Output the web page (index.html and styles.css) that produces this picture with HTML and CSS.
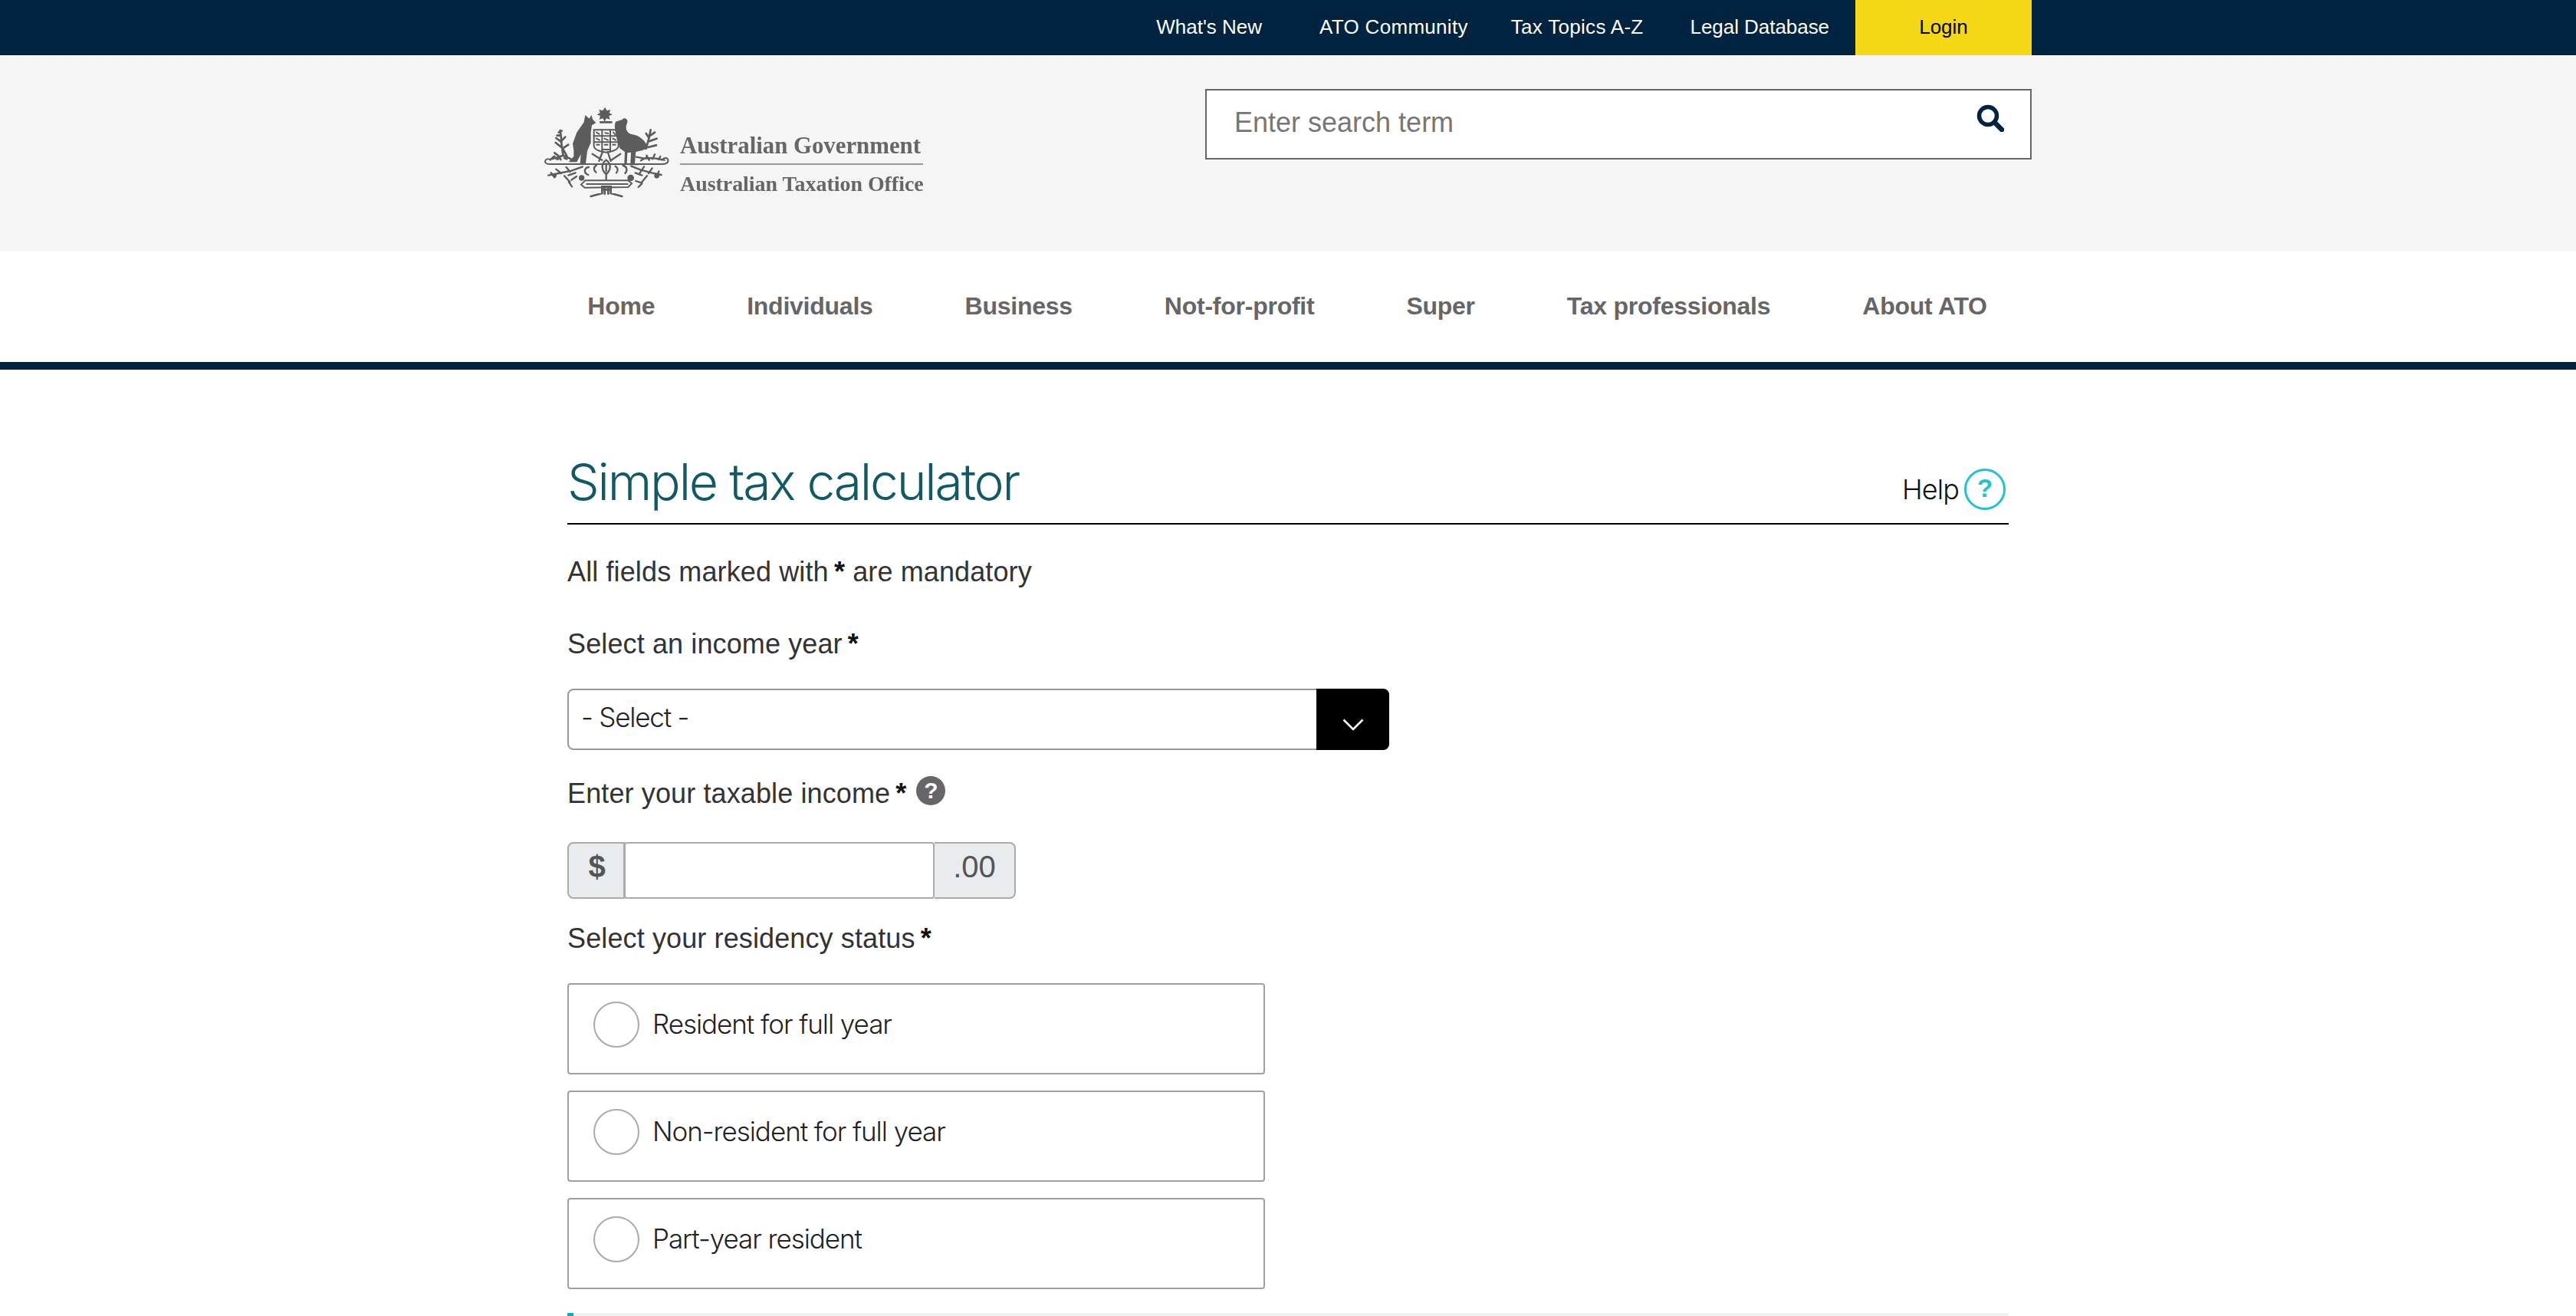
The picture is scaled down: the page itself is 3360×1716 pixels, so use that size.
FILE: index.html
```html
<!DOCTYPE html>
<html lang="en">
<head>
<meta charset="utf-8">
<title>Simple tax calculator</title>
<link rel="stylesheet" href="styles.css">
</head>
<body>
<div class="topbar">
  <nav class="topbar-inner">
    <a class="top-link tl-new">What's New</a>
    <a class="top-link tl-com">ATO Community</a>
    <a class="top-link tl-tax">Tax Topics A-Z</a>
    <a class="top-link tl-leg">Legal Database</a>
    <a class="login">Login</a>
  </nav>
</div>
<header class="masthead">
  <div class="masthead-inner">
    <div class="logo">
      <svg class="crest" viewBox="0 0 570 390" aria-hidden="true">
        <g fill="#5c5c5c">
          <path d="M268 30l7 13 14-4-5 13 12 6-13 6 4 13-14-4-7 13-7-13-14 4 4-13-13-6 12-6-4-13 14 4z"/>
          <rect x="246" y="84" width="50" height="8" rx="3"/>
          <path d="M190 60l16 14 8-14 6 18 12 13-16 9-4 28 0 40-14 32-6 50h-22l3-36-16 30h-32l20-22 0-24-4-26 16-44 28-40z"/>
          <path d="M335 78c4-8 18-6 20 4 2 10-6 16-5 28 1 12 8 22 24 26 28 4 50 22 62 52l-22 10-26 6-4 46h14v6h-40l9-8 2-42-14 2-2 42h-10l2-46-20-14-12-40-6-30c-2-14-2-26 2-34z"/>
        </g>
        <g fill="none" stroke="#5c5c5c" stroke-linecap="round">
          <path d="M224 118h96v62c0 14-20 22-48 26-28-4-48-12-48-26z" stroke-width="6"/>
          <path d="M224 142h96M224 166h96M256 118v86M288 118v86" stroke-width="6"/>
          <path d="M234 128l10 6M268 130l12 2M300 128l8 8M234 152l12 6M265 152l14 6M298 152l12 6M235 176h10M266 176h12M298 176h10M256 195h32" stroke-width="6"/>
          <path d="M50 252h440c18 0 26-6 24-16s-14-10-20-4" stroke-width="6"/>
          <path d="M50 252c-14 0-20-8-16-14 3-7 12-8 20-2" stroke-width="6"/>
          <path d="M56 232l26-6 22-8 30 14M70 208l16 12 8 14M100 196l4 22M92 120l4 30 2 34 20 36M76 150l22 16M74 168l28 22M112 146l-14 14M124 176l-18 12" stroke-width="8"/>
          <path d="M78 232h6M62 226l8-4M108 228l10 4M86 128l12-6M80 140l10 0" stroke-width="8"/>
          <path d="M446 118l-6 30-12 44M462 128l-20 14M470 152l-34 12M468 178l-32 8M428 132l12 18" stroke-width="8"/>
          <path d="M390 224l30 6 36-2 34 6M430 218l10 18M462 214l-8 18M408 238l22-12M484 222l-6 12M500 236l-14-2" stroke-width="7"/>
          <path d="M258 204l-14 36M278 204l12 36M218 212l38 24M328 212l-36 24M272 236c-20 14-20 38 0 56 20-18 20-42 0-56zM272 292v20M272 250v30" stroke-width="7"/>
          <path d="M46 296l40-8 50-10 44-16M76 272l20 16M116 264l14 18M152 286l-28 10M108 298l22 24M156 300l-20 14M126 322l12 18M56 286l14 18M204 264c-20 2-20 24-2 30M234 256c-12 8-12 20-2 28" stroke-width="7"/>
          <path d="M488 294l-38-8-44-12-36-14M452 268l-14 20M420 262l-16 24M386 286l26 10M432 298l-20 24M388 318l24 8M398 342l14-14M478 280l-8 22M338 258c16 2 18 20 8 30M308 260c10 6 12 18 4 26" stroke-width="7"/>
          <path d="M190 316l-16 16 14 12 170-2 14-14-14-12zM196 330h160" stroke-width="6"/>
          <path d="M212 378l44-12v-26h34v26l44 12M256 352h34M266 340v28M280 340v28" stroke-width="8"/>
        </g>
        <g fill="#5c5c5c">
          <circle cx="176" cy="306" r="11"/>
          <circle cx="368" cy="306" r="13"/>
          <circle cx="470" cy="298" r="10"/>
          <circle cx="70" cy="296" r="8"/>
        </g>
      </svg>
      <div class="logo-text">
        <div class="logo-gov">Australian Government</div>
        <div class="logo-ato">Australian Taxation Office</div>
      </div>
    </div>
    <form class="search">
      <input class="search-input" type="text" placeholder="Enter search term">
      <svg class="search-icon" viewBox="0 0 36 36" aria-hidden="true">
        <circle cx="15" cy="15" r="11.5" fill="none" stroke="#00233f" stroke-width="5.5"/>
        <path d="M23.5 23.5L33 33" stroke="#00233f" stroke-width="6.5" stroke-linecap="round"/>
      </svg>
    </form>
  </div>
</header>
<nav class="mainnav">
  <a class="nav-item">Home</a>
  <a class="nav-item">Individuals</a>
  <a class="nav-item">Business</a>
  <a class="nav-item">Not-for-profit</a>
  <a class="nav-item">Super</a>
  <a class="nav-item">Tax professionals</a>
  <a class="nav-item">About ATO</a>
</nav>
<main class="content">
  <div class="title-row">
    <h1 class="title">Simple tax calculator</h1>
    <div class="help"><span class="help-text">Help</span><span class="help-icon">?</span></div>
  </div>
  <p class="note">All fields marked with <b class="req">*</b> are mandatory</p>
  <label class="field-label lb-year">Select an income year <b class="req">*</b></label>
  <div class="select">
    <span class="select-value">- Select -</span>
    <span class="select-btn">
      <svg class="chev" viewBox="0 0 28 16" aria-hidden="true"><path d="M1.5 1.5L14 14L26.5 1.5" fill="none" stroke="#fff" stroke-width="2.6"/></svg>
    </span>
  </div>
  <label class="field-label lb-income">Enter your taxable income <b class="req">*</b><span class="tip">?</span></label>
  <div class="money">
    <span class="addon addon-l">$</span>
    <input class="money-input" type="text" aria-label="Taxable income">
    <span class="addon addon-r">.00</span>
  </div>
  <label class="field-label lb-res">Select your residency status <b class="req">*</b></label>
  <div class="radios">
    <label class="radio"><span class="radio-dot"></span><span class="radio-text">Resident for full year</span></label>
    <label class="radio"><span class="radio-dot"></span><span class="radio-text">Non-resident for full year</span></label>
    <label class="radio"><span class="radio-dot"></span><span class="radio-text">Part-year resident</span></label>
  </div>
  <div class="progress"><span class="progress-fill"></span></div>
</main>
</body>
</html>
```
FILE: styles.css
```css
* { box-sizing: border-box; }
html, body { margin: 0; padding: 0; background: #fff; }
body { height: 1716px; overflow: hidden; font-family: "Liberation Sans", Arial, sans-serif; color: #333; }

.topbar { background: #00233f; height: 72px; }
.topbar-inner { width: 1940px; margin: 0 auto; height: 72px; display: flex; justify-content: flex-end; align-items: stretch; }
.top-link { color: #fff; font-size: 26px; line-height: 70px; }
.tl-com { margin-left: 75px; letter-spacing: .3px; }
.tl-tax { margin-left: 56px; letter-spacing: .3px; }
.tl-leg { margin-left: 61px; margin-right: 34px; letter-spacing: -.05px; }
.login { width: 230px; background: #f5d815; color: #000; font-size: 26px; line-height: 70px; text-align: center; }

.masthead { background: #f5f5f5; height: 256px; }
.masthead-inner { width: 1940px; margin: 0 auto; display: flex; justify-content: space-between; align-items: flex-start; }
.logo { display: flex; margin-top: 58px; }
.crest { width: 190px; height: 130px; margin-left: -10px; filter: blur(.6px); }
.logo-text { margin-left: -3px; margin-top: 39px; font-family: "Liberation Serif", serif; font-weight: 700; color: #666; width: 317px; filter: blur(.5px); }
.logo-gov { font-size: 30.8px; line-height: 42px; height: 46px; border-bottom: 2px solid #999; white-space: nowrap; }
.logo-ato { font-size: 27.9px; line-height: 42px; margin-top: 4px; white-space: nowrap; }
.search { width: 1078px; height: 92px; margin-top: 44px; background: #fff; border: 2px solid #666; display: flex; align-items: flex-start; }
.search-input { flex: 1; min-width: 0; height: 84px; border: 0; outline: 0; background: transparent; padding: 0 0 0 36px; font-family: inherit; font-size: 36px; color: #333; }
.search-input::placeholder { color: #767676; opacity: 1; }
.search-icon { width: 36px; height: 36px; margin: 18px 34px 0 0; }

.mainnav { height: 154px; border-bottom: 10px solid #00233f; display: flex; justify-content: center; padding: 52px 2px 0 0; }
.nav-item { padding: 0 60px; font-size: 32px; line-height: 38px; height: 38px; font-weight: 700; color: #666; white-space: nowrap; letter-spacing: -.25px; }

.content { width: 1880px; margin: 0 auto; }
.title-row { display: flex; justify-content: space-between; align-items: flex-start; height: 202px; padding-top: 106px; border-bottom: 2px solid #000; }
.title { margin: 0; font-family: Inter, sans-serif; font-weight: 300; font-size: 66px; line-height: 80px; color: #0f5a66; letter-spacing: -2.2px; white-space: nowrap; }
.help { display: flex; align-items: center; margin-right: 4px; margin-top: 23px; }
.help-text { font-family: Inter, sans-serif; font-weight: 300; font-size: 36px; color: #111; letter-spacing: -.9px; margin-right: 7px; }
.help-icon { width: 54px; height: 54px; border: 3.5px solid #1bc3d4; border-radius: 50%; color: #1bc3d4; font-weight: 700; font-size: 33px; line-height: 46px; text-align: center; }

.note { margin: 42px 0 0; font-size: 36px; line-height: 40px; letter-spacing: .12px; }
.req { color: #111; font-weight: 700; margin-left: -3px; }
.field-label { display: block; font-size: 36px; line-height: 40px; letter-spacing: .12px; }
.lb-year { margin-top: 54px; }
.select { display: flex; margin-top: 38px; width: 1072px; height: 80px; border: 2px solid #999; border-radius: 8px; background: #fff; }
.select-value { flex: 1; padding-left: 16px; font-family: Inter, sans-serif; font-weight: 300; font-size: 35px; line-height: 70px; color: #222; letter-spacing: -1.2px; }
.select-btn { width: 95px; margin: -2px -2px -2px 0; background: #000; border-radius: 0 8px 8px 0; display: flex; justify-content: center; }
.chev { width: 28px; height: 16px; margin-top: 39px; }
.lb-income { margin-top: 37px; display: flex; align-items: flex-start; white-space: pre; }
.tip { width: 38px; height: 38px; margin-left: 13px; margin-top: -3px; border-radius: 50%; background: #666; color: #fff; font-weight: 700; font-size: 30px; line-height: 38px; text-align: center; }
.money { display: flex; margin-top: 43px; height: 74px; width: 586px; }
.addon { background: #e9ecee; border: 2px solid #aaa; color: #555; display: block; text-align: center; }
.addon-l { width: 75px; padding-left: 2px; border-radius: 8px 0 0 8px; font-weight: 700; font-size: 40px; line-height: 60px; }
.addon-r { width: 106px; border-radius: 0 8px 8px 0; border-left: 0; font-size: 40px; line-height: 60px; color: #555; }
.money-input { width: 405px; border: 2px solid #aaa; border-radius: 4px; background: #fff; outline: 0; padding: 0; margin-left: -1px; }
.lb-res { margin-top: 32px; }
.radios { display: flex; flex-direction: column; gap: 21px; margin-top: 38px; }
.radio { display: flex; align-items: flex-start; width: 910px; height: 119px; border: 2px solid #a0a0a0; border-radius: 4px; padding: 22px 0 0 32px; }
.radio-dot { width: 60px; height: 60px; border: 2px solid #aaa; border-radius: 50%; flex: none; }
.radio-text { margin-left: 17px; margin-top: 3px; font-family: Inter, sans-serif; font-weight: 300; font-size: 35px; line-height: 52px; color: #222; letter-spacing: -1.05px; }
.progress { height: 4px; margin-top: 31px; background: #f0f2f2; }
.progress-fill { display: block; width: 8px; height: 4px; background: #19a9b5; }
```
